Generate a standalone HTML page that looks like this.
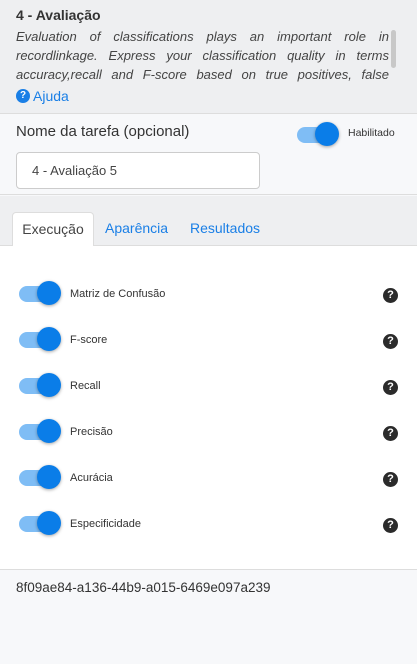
<!DOCTYPE html>
<html><head><meta charset="utf-8"><style>
*{margin:0;padding:0;box-sizing:border-box}
body{width:417px;height:664px;overflow:hidden;font-family:"Liberation Sans",sans-serif;background:#f7f8fa;position:relative;color:#333}
.abs{position:absolute}
.sw{position:absolute;width:42px;height:24px}
.sw .tr{position:absolute;left:0;top:5px;width:40px;height:16px;border-radius:8px;background:#7fbdf5}
.sw .kn{position:absolute;left:18px;top:0;width:24px;height:24px;border-radius:50%;background:#0a7de8;box-shadow:0 1px 3px rgba(0,0,0,.35)}
.lbl{position:absolute;left:70px;font-size:11px;color:#333}
.q{position:absolute;left:383px;width:15px;height:15px;border-radius:50%;background:#2b2b2b;color:#fff;font-size:11px;font-weight:bold;text-align:center;line-height:15px}
</style></head><body>
<div class="abs" style="left:0;top:0;width:417px;height:114px;background:#eeeff1;border-bottom:1px solid #ddd"></div>
<div class="abs" style="left:16px;top:7px;font-size:14px;font-weight:bold;color:#333">4 - Avaliação</div>
<div class="abs" style="left:16px;top:27px;width:373px;font-size:13px;font-style:italic;line-height:19px;text-align:justify;color:#444;height:57px;overflow:hidden">Evaluation of classifications plays an important role in recordlinkage. Express your classification quality in terms accuracy,recall and F-score based on true positives, false negatives and more.</div>
<div class="abs" style="left:391px;top:30px;width:5px;height:38px;border-radius:3px;background:#c8c8c8"></div>
<div class="abs" style="left:16px;top:89px;width:14px;height:14px;border-radius:50%;background:#1a7fe6;color:#fff;font-size:10px;font-weight:bold;text-align:center;line-height:14px">?</div>
<div class="abs" style="left:33px;top:88px;font-size:14px;color:#1a7fe6">Ajuda</div>
<div class="abs" style="left:0;top:115px;width:417px;height:80px;background:#f7f8fa;border-bottom:1px solid #ddd"></div>
<div class="abs" style="left:16px;top:123px;font-size:15px;color:#333">Nome da tarefa (opcional)</div>
<div class="sw" style="left:297px;top:122px"><div class="tr"></div><div class="kn"></div></div>
<div class="abs" style="left:348px;top:127px;font-size:10.5px;color:#333">Habilitado</div>
<div class="abs" style="left:16px;top:152px;width:244px;height:37px;background:#fff;border:1px solid #ccc;border-radius:4px;font-size:13px;padding:10px 0 0 15px;color:#444">4 - Avaliação 5</div>
<div class="abs" style="left:0;top:196px;width:417px;height:50px;background:#eeeff1;border-bottom:1px solid #ddd"></div>
<div class="abs" style="left:12px;top:212px;width:82px;height:35px;background:#fff;border:1px solid #ddd;border-bottom:none;border-radius:4px 4px 0 0;font-size:14px;color:#444;text-align:center;padding-top:8px">Execução</div>
<div class="abs" style="left:105px;top:220px;font-size:14px;color:#1a7fe6">Aparência</div>
<div class="abs" style="left:190px;top:220px;font-size:14px;color:#1a7fe6">Resultados</div>
<div class="abs" style="left:0;top:246px;width:417px;height:324px;background:#fff;border-bottom:1px solid #ddd"></div>
<div class="sw" style="left:19px;top:281px"><div class="tr"></div><div class="kn"></div></div><div class="lbl" style="top:288px">Matriz de Confusão</div><div class="q" style="top:288px">?</div>
<div class="sw" style="left:19px;top:327px"><div class="tr"></div><div class="kn"></div></div><div class="lbl" style="top:334px">F-score</div><div class="q" style="top:334px">?</div>
<div class="sw" style="left:19px;top:373px"><div class="tr"></div><div class="kn"></div></div><div class="lbl" style="top:380px">Recall</div><div class="q" style="top:380px">?</div>
<div class="sw" style="left:19px;top:419px"><div class="tr"></div><div class="kn"></div></div><div class="lbl" style="top:426px">Precisão</div><div class="q" style="top:426px">?</div>
<div class="sw" style="left:19px;top:465px"><div class="tr"></div><div class="kn"></div></div><div class="lbl" style="top:472px">Acurácia</div><div class="q" style="top:472px">?</div>
<div class="sw" style="left:19px;top:511px"><div class="tr"></div><div class="kn"></div></div><div class="lbl" style="top:518px">Especificidade</div><div class="q" style="top:518px">?</div>
<div class="abs" style="left:16px;top:580px;font-size:13.5px;color:#333">8f09ae84-a136-44b9-a015-6469e097a239</div>
</body></html>
